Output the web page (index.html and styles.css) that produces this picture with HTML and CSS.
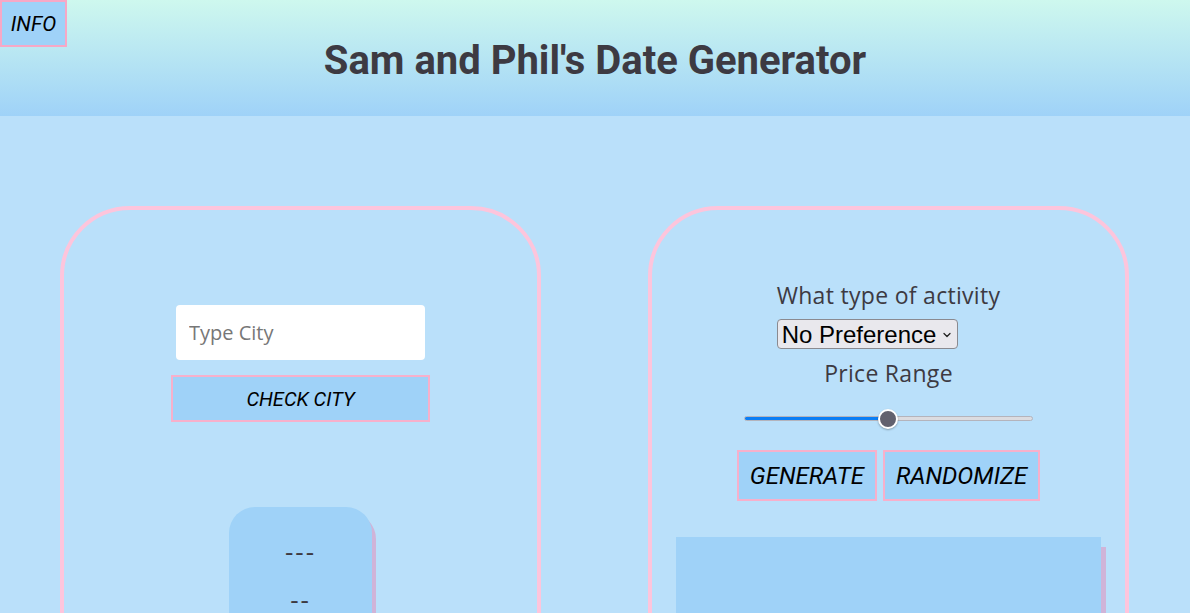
FILE: index.html
```html
<!DOCTYPE html>
<html>
<head>
<meta charset="utf-8">
<link rel="stylesheet" href="styles.css">
</head>
<body>
<header class="header">
  <button class="info-btn">INFO</button>
  <h1 class="title">Sam and Phil's Date Generator</h1>
</header>
<main class="cards">
  <section class="card">
    <div class="city-form">
      <input class="city-input" type="text" placeholder="Type City">
      <button class="pink-btn check-btn">CHECK CITY</button>
    </div>
    <div class="weather-box">
      <p class="dash">---</p>
      <p class="dash">--</p>
    </div>
  </section>
  <section class="card">
    <div class="activity-form">
      <div class="activity-inner">
        <label class="label">What type of activity</label>
        <div class="select-wrap">
          <select class="select"><option>No Preference</option></select>
          <svg class="chevron" width="8" height="6" viewBox="0 0 8 6"><path d="M1 1.5 L4 4.5 L7 1.5" fill="none" stroke="#222" stroke-width="1.3" stroke-linecap="round" stroke-linejoin="round"/></svg>
        </div>
      </div>
      <p class="label price-label">Price Range</p>
      <input class="range" type="range" min="0" max="100" value="50">
      <div class="btn-row">
        <button class="pink-btn big-btn">GENERATE</button>
        <button class="pink-btn big-btn">RANDOMIZE</button>
      </div>
    </div>
    <div class="result-box"></div>
  </section>
</main>
</body>
</html>
```
FILE: styles.css
```css
html, body {
  margin: 0;
  padding: 0;
  height: 100%;
  overflow: hidden;
}
body {
  background: #bae0fa;
  font-family: "Open Sans", sans-serif;
}
.header {
  position: relative;
  height: 116px;
  background: linear-gradient(to bottom, #cef8ee 0%, #9fd2f8 100%);
  display: flex;
  align-items: center;
  justify-content: center;
}
.info-btn {
  position: absolute;
  left: 0;
  top: 0;
  width: 67px;
  height: 47px;
  background: #9fd2f8;
  border: 2px solid #f7a8c6;
  font-family: Roboto, sans-serif;
  font-style: italic;
  font-size: 21px;
  color: #000;
  padding: 0;
}
.title {
  margin: 0;
  font-family: Roboto, sans-serif;
  font-weight: 700;
  font-size: 40px;
  color: #3d3a42;
  transform: translateY(2px);
}
.cards {
  display: flex;
  gap: 107px;
  padding: 90px 0 0 60px;
}
.card {
  box-sizing: border-box;
  width: 481px;
  height: 600px;
  border: 4px solid #fdc5dc;
  border-radius: 70px;
  display: flex;
  flex-direction: column;
  align-items: center;
}
.city-form {
  margin-top: 95px;
  display: flex;
  flex-direction: column;
  align-items: center;
}
.city-input {
  box-sizing: border-box;
  width: 249px;
  height: 55px;
  border: none;
  border-radius: 4px;
  background: #fff;
  padding: 0 13px;
  font-family: "Open Sans", sans-serif;
  font-size: 20px;
  outline: none;
}
.city-input::placeholder {
  color: #777;
}
.pink-btn {
  background: #9fd2f8;
  border: 2px solid #f7b0cb;
  font-family: Roboto, sans-serif;
  font-style: italic;
  color: #000;
  padding: 0;
}
.check-btn {
  margin-top: 15px;
  width: 259px;
  height: 47px;
  font-size: 20px;
}
.weather-box {
  margin-top: 85px;
  width: 143px;
  height: 200px;
  background: #9fd2f8;
  border-radius: 26px 26px 0 0;
  box-shadow: 4px 6px 0 #d0b4d8;
  display: flex;
  flex-direction: column;
  align-items: center;
}
.dash {
  margin: 0;
  font-family: "Open Sans", sans-serif;
  font-size: 26px;
  letter-spacing: 2px;
  color: #3d3a42;
  line-height: 1;
}
.dash:first-child {
  margin-top: 31px;
}
.dash + .dash {
  margin-top: 22px;
}
.activity-form {
  margin-top: 70px;
  display: flex;
  flex-direction: column;
  align-items: center;
}
.activity-inner {
  display: flex;
  flex-direction: column;
  align-items: flex-start;
}
.label {
  font-family: "Open Sans", sans-serif;
  font-size: 23px;
  letter-spacing: 0.3px;
  color: #3d3a42;
  margin: 0;
  line-height: 30px;
}
.select-wrap {
  position: relative;
  margin-top: 9px;
}
.select {
  appearance: none;
  -webkit-appearance: none;
  display: block;
  box-sizing: border-box;
  height: 30px;
  width: 181px;
  font-family: "Liberation Sans", Arial, sans-serif;
  font-size: 24px;
  color: #000;
  background: #e9e8ed;
  border: 1px solid #8a8a90;
  border-radius: 4px;
  padding: 0 4px;
}
.chevron {
  position: absolute;
  right: 7px;
  top: 13px;
}
.price-label {
  margin-top: 9px;
}
.range {
  -webkit-appearance: none;
  appearance: none;
  margin: 28px 0 0 0;
  width: 289px;
  height: 5px;
  border-radius: 3px;
  border: 1px solid #b4b4bc;
  background: linear-gradient(to right, #0a7ef5 0%, #0a7ef5 50%, #dcdce0 50%, #dcdce0 100%);
  box-sizing: border-box;
}
.range::-webkit-slider-thumb {
  -webkit-appearance: none;
  width: 20px;
  height: 20px;
  border-radius: 50%;
  background: #62616e;
  border: 2px solid #fff;
  box-shadow: 0 1px 2px rgba(0,0,0,0.3);
  box-sizing: border-box;
}
.btn-row {
  margin-top: 29px;
  display: flex;
  gap: 6px;
}
.big-btn {
  height: 51px;
  font-size: 24px;
  padding: 0 11px;
}
.result-box {
  margin-top: 36px;
  width: 425px;
  height: 200px;
  background: #9fd2f8;
  box-shadow: 5px 10px 0 #d0b4d8;
}
```
